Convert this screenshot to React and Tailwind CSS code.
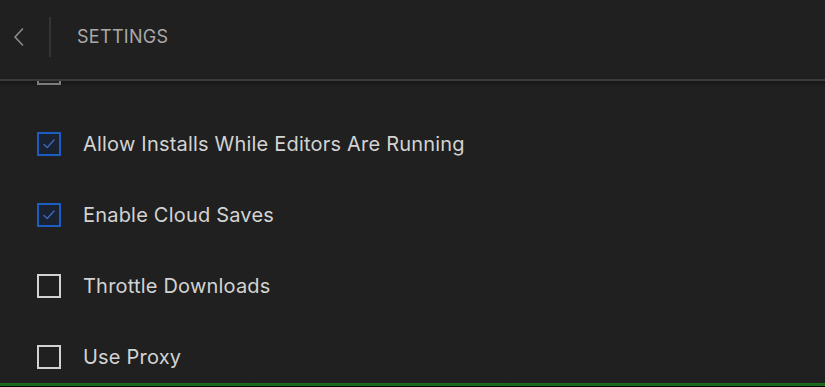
import React from "react";

function Check({ checked, faded }) {
  if (checked) {
    return (
      <div className="w-[24px] h-[24px] shrink-0 border-2 border-[#1d5cc0] bg-[#1a2232] flex items-center justify-center">
        <svg width="16" height="16" viewBox="0 0 16 16" fill="none">
          <path d="M3 8.5 L6.3 11.5 L13 4" stroke="#3868b4" strokeWidth="1.5" strokeLinecap="round" strokeLinejoin="round" />
        </svg>
      </div>
    );
  }
  if (faded) {
    return <div className="w-[24px] h-[24px] shrink-0 border-2 border-[#7c7c7c] bg-[#202020]" />;
  }
  return <div className="w-[24px] h-[24px] shrink-0 border-2 border-[#d2d2d2] bg-[#202020]" />;
}

const rows = [
  { label: "", checked: false, faded: true },
  { label: "Allow Installs While Editors Are Running", checked: true },
  { label: "Enable Cloud Saves", checked: true },
  { label: "Throttle Downloads", checked: false },
  { label: "Use Proxy", checked: false },
];

export default function App() {
  return (
    <div className="w-[825px] h-[387px] bg-[#202020] flex flex-col overflow-hidden" style={{ fontFamily: "Inter, 'Noto Sans', sans-serif" }}>
      <header className="h-[79px] shrink-0 flex items-center pb-[5px] bg-[#202020]">
        <div className="w-[49px] flex justify-center">
          <svg width="14" height="20" viewBox="0 0 14 20" fill="none" className="-ml-[12px]">
            <path d="M10.5 2 L3 10 L10.5 18" stroke="#8a8a8a" strokeWidth="1.7" strokeLinecap="round" strokeLinejoin="round" />
          </svg>
        </div>
        <div className="w-[2px] h-[40px] bg-[#343434]" />
        <div className="ml-[26px] text-[18px] tracking-[0.3px] text-[#a9a9a9] leading-none">SETTINGS</div>
      </header>
      <div className="h-[2px] shrink-0 bg-[#3b3b3b]" />
      <main className="flex-1 overflow-hidden bg-gradient-to-b from-[#161616] from-0% to-[#202020] to-[6px]">
        <div className="-mt-[44px] flex flex-col">
          {rows.map((r, i) => (
            <div key={i} className="h-[71px] flex items-center pl-[37px] gap-[22px]">
              <Check checked={r.checked} faded={r.faded} />
              <span className="text-[20px] text-[#d3d3d3] tracking-[0.2px]">{r.label}</span>
            </div>
          ))}
        </div>
      </main>
      <div className="h-[3px] shrink-0 bg-[#1b6a1b]" />
      <div className="h-[1px] shrink-0 bg-[#050505]" />
    </div>
  );
}
